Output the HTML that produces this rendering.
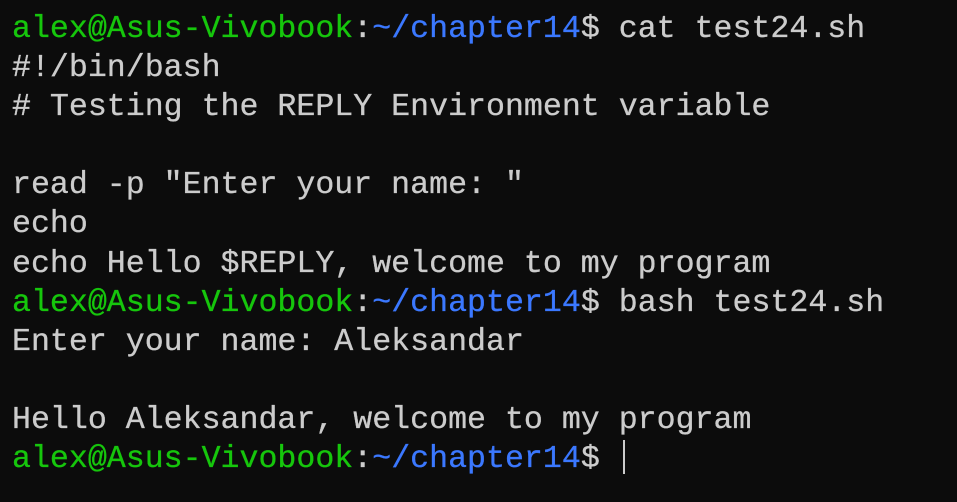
<!DOCTYPE html>
<html><head><style>
html,body{margin:0;padding:0;background:#0c0c0c;width:957px;height:502px;overflow:hidden}
pre{margin:0;padding:10px 0 0 12px;font-family:"Liberation Mono","DejaVu Sans Mono",monospace;font-size:31.6px;line-height:39.1px;color:#cccccc;white-space:pre;-webkit-text-stroke:0.3px currentColor}
.g{color:#16c60c}.b{color:#3b78ff}
.c{display:inline-block;width:2px;height:34px;background:#cccccc;vertical-align:-7px;margin-left:4px}
</style></head><body><pre><span class="g">alex@Asus-Vivobook</span>:<span class="b">~/chapter14</span>$ cat test24.sh
#!/bin/bash
# Testing the REPLY Environment variable

read -p "Enter your name: "
echo
echo Hello $REPLY, welcome to my program
<span class="g">alex@Asus-Vivobook</span>:<span class="b">~/chapter14</span>$ bash test24.sh
Enter your name: Aleksandar

Hello Aleksandar, welcome to my program
<span class="g">alex@Asus-Vivobook</span>:<span class="b">~/chapter14</span>$ <span class="c"></span></pre></body></html>
